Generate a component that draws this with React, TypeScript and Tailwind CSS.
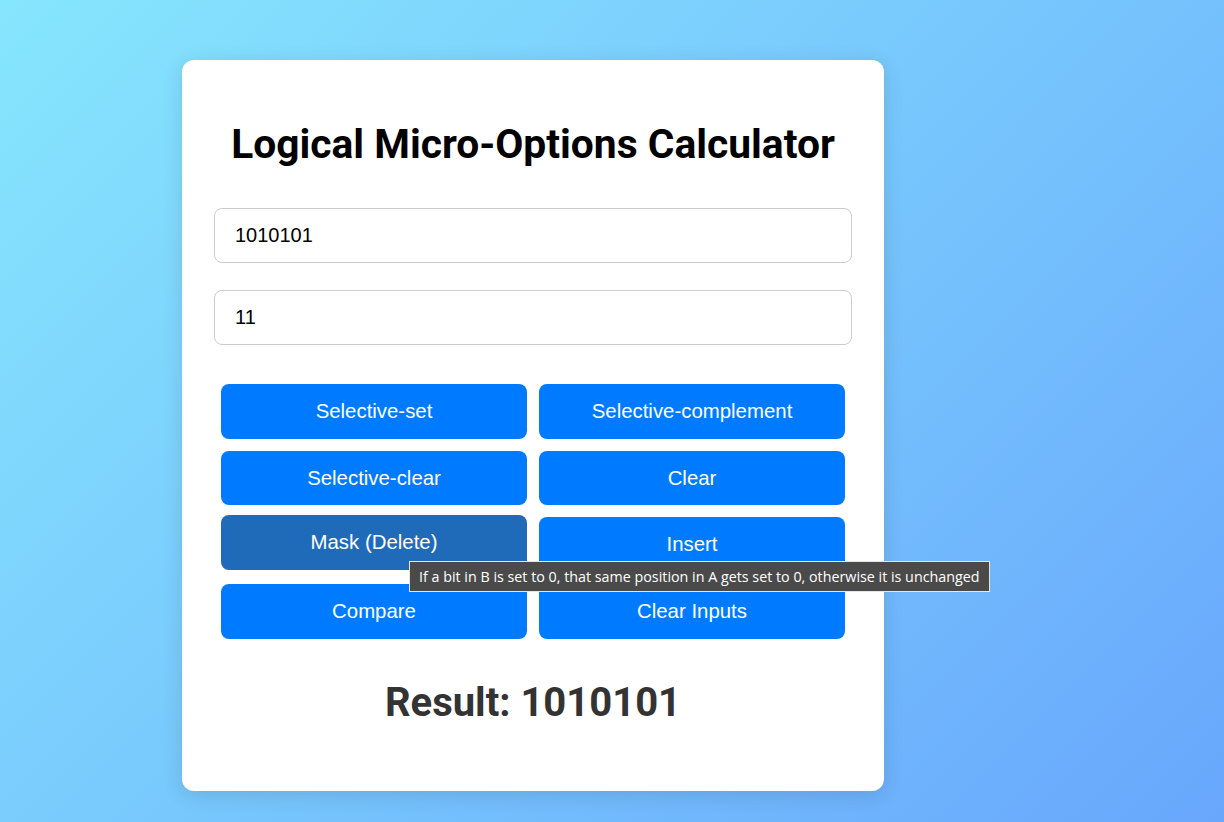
import * as React from "react"

const operations = [
  { id: "sset", name: "Selective-set" },
  { id: "scomp", name: "Selective-complement" },
  { id: "sclear", name: "Selective-clear" },
  { id: "clear", name: "Clear" },
  { id: "mask", name: "Mask (Delete)", hint: "If a bit in B is set to 0, that same position in A gets set to 0, otherwise it is unchanged" },
  { id: "insert", name: "Insert" },
  { id: "compare", name: "Compare" },
  { id: "reset", name: "Clear Inputs" },
]

export default function App() {
  const [a, setA] = React.useState("1010101")
  const [b, setB] = React.useState("11")
  const [result] = React.useState("1010101")
  const hovered = "mask"

  return (
    <div className="min-h-[822px] w-full bg-[linear-gradient(135deg,#86e6fd,#68a7fc)] font-['Liberation_Sans',Arial,sans-serif]">
      <div className="pl-[182px] pt-[60px]">
        <div className="w-[702px] rounded-xl bg-white px-8 pb-[65px] pt-[61px] shadow-[0_4px_20px_rgba(0,0,0,0.12)]">
          <h1 className="text-center font-['Roboto',sans-serif] text-[40.75px] font-bold leading-[47px] text-black">
            Logical Micro-Options Calculator
          </h1>

          {/* Inputs */}
          <div className="mt-10 flex flex-col gap-[27px]">
            <input
              value={a}
              onChange={(e) => setA(e.target.value)}
              className="h-[55px] w-full rounded-lg border border-[#cccccc] px-5 text-[20px] text-black outline-none"
            />
            <input
              value={b}
              onChange={(e) => setB(e.target.value)}
              className="h-[55px] w-full rounded-lg border border-[#cccccc] px-5 text-[20px] text-black outline-none"
            />
          </div>

          {/* Operation buttons */}
          <div className="mt-[39px] grid grid-cols-2 gap-3 px-[7px]">
            {operations.map((op) => (
              <div key={op.id} className="relative">
                <button
                  className={
                    op.id === hovered
                      ? "h-[54.7px] w-full -translate-y-0.5 rounded-lg bg-[#206bb9] text-[20.4px] text-white"
                      : "h-[54.7px] w-full rounded-lg bg-[#007bff] text-[20.4px] text-white"
                  }
                >
                  {op.name}
                </button>
                {op.hint && op.id === hovered && (
                  <div className="absolute left-[188px] top-[44px] z-10 whitespace-nowrap border border-[#e6e6e6] bg-[#4a4a4a] px-[9px] py-[5px] font-['Open_Sans',sans-serif] text-[14.3px] leading-[19px] text-white">
                    {op.hint}
                  </div>
                )}
              </div>
            ))}
          </div>

          <h2 className="mt-10 text-center font-['Roboto',sans-serif] text-[40px] font-bold leading-[47px] text-[#333333]">
            Result: {result}
          </h2>
        </div>
      </div>
    </div>
  )
}
